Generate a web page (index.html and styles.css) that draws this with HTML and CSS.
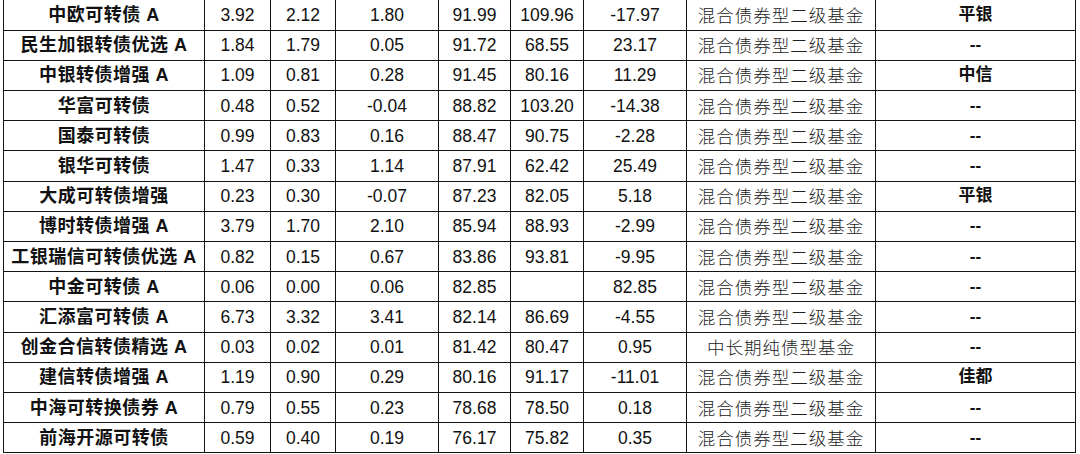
FILE: index.html
```html
<!DOCTYPE html>
<html>
<head>
<meta charset="utf-8">
<link rel="stylesheet" href="styles.css">
</head>
<body>
<div class="wrap">
<table class="funds">
<colgroup>
<col class="c-name"><col class="c-a"><col class="c-b"><col class="c-c"><col class="c-d"><col class="c-e"><col class="c-f"><col class="c-type"><col class="c-mgr">
</colgroup>
<tbody>
<tr><td class="name">中欧可转债 A</td><td>3.92</td><td>2.12</td><td>1.80</td><td>91.99</td><td>109.96</td><td>-17.97</td><td class="type">混合债券型二级基金</td><td class="mgr">平银</td></tr>
<tr><td class="name">民生加银转债优选 A</td><td>1.84</td><td>1.79</td><td>0.05</td><td>91.72</td><td>68.55</td><td>23.17</td><td class="type">混合债券型二级基金</td><td class="mgr">--</td></tr>
<tr><td class="name">中银转债增强 A</td><td>1.09</td><td>0.81</td><td>0.28</td><td>91.45</td><td>80.16</td><td>11.29</td><td class="type">混合债券型二级基金</td><td class="mgr">中信</td></tr>
<tr><td class="name">华富可转债</td><td>0.48</td><td>0.52</td><td>-0.04</td><td>88.82</td><td>103.20</td><td>-14.38</td><td class="type">混合债券型二级基金</td><td class="mgr">--</td></tr>
<tr><td class="name">国泰可转债</td><td>0.99</td><td>0.83</td><td>0.16</td><td>88.47</td><td>90.75</td><td>-2.28</td><td class="type">混合债券型二级基金</td><td class="mgr">--</td></tr>
<tr><td class="name">银华可转债</td><td>1.47</td><td>0.33</td><td>1.14</td><td>87.91</td><td>62.42</td><td>25.49</td><td class="type">混合债券型二级基金</td><td class="mgr">--</td></tr>
<tr><td class="name">大成可转债增强</td><td>0.23</td><td>0.30</td><td>-0.07</td><td>87.23</td><td>82.05</td><td>5.18</td><td class="type">混合债券型二级基金</td><td class="mgr">平银</td></tr>
<tr><td class="name">博时转债增强 A</td><td>3.79</td><td>1.70</td><td>2.10</td><td>85.94</td><td>88.93</td><td>-2.99</td><td class="type">混合债券型二级基金</td><td class="mgr">--</td></tr>
<tr><td class="name">工银瑞信可转债优选 A</td><td>0.82</td><td>0.15</td><td>0.67</td><td>83.86</td><td>93.81</td><td>-9.95</td><td class="type">混合债券型二级基金</td><td class="mgr">--</td></tr>
<tr><td class="name">中金可转债 A</td><td>0.06</td><td>0.00</td><td>0.06</td><td>82.85</td><td></td><td>82.85</td><td class="type">混合债券型二级基金</td><td class="mgr">--</td></tr>
<tr><td class="name">汇添富可转债 A</td><td>6.73</td><td>3.32</td><td>3.41</td><td>82.14</td><td>86.69</td><td>-4.55</td><td class="type">混合债券型二级基金</td><td class="mgr">--</td></tr>
<tr><td class="name">创金合信转债精选 A</td><td>0.03</td><td>0.02</td><td>0.01</td><td>81.42</td><td>80.47</td><td>0.95</td><td class="type">中长期纯债型基金</td><td class="mgr">--</td></tr>
<tr><td class="name">建信转债增强 A</td><td>1.19</td><td>0.90</td><td>0.29</td><td>80.16</td><td>91.17</td><td>-11.01</td><td class="type">混合债券型二级基金</td><td class="mgr">佳都</td></tr>
<tr><td class="name">中海可转换债券 A</td><td>0.79</td><td>0.55</td><td>0.23</td><td>78.68</td><td>78.50</td><td>0.18</td><td class="type">混合债券型二级基金</td><td class="mgr">--</td></tr>
<tr><td class="name">前海开源可转债</td><td>0.59</td><td>0.40</td><td>0.19</td><td>76.17</td><td>75.82</td><td>0.35</td><td class="type">混合债券型二级基金</td><td class="mgr">--</td></tr>
</tbody>
</table>
</div>
</body>
</html>
```
FILE: styles.css
```css
html, body {
  margin: 0;
  padding: 0;
  background: #ffffff;
}
.wrap {
  padding-left: 3px;
}
.funds {
  border-collapse: collapse;
  table-layout: fixed;
  width: 1072px;
  font-family: "Liberation Sans", Arial, "Noto Sans CJK SC", sans-serif;
  font-size: 17.5px;
  color: #111111;
}
.c-name { width: 201px; }
.c-a { width: 66px; }
.c-b { width: 65px; }
.c-c { width: 103px; }
.c-d { width: 72px; }
.c-e { width: 73px; }
.c-f { width: 103px; }
.c-type { width: 189px; }
.c-mgr { width: 200px; }
.funds tr {
  height: 30.2px;
}
.funds td {
  border: 1px solid #151515;
  padding: 0;
  text-align: center;
  vertical-align: middle;
  line-height: 20px;
  white-space: nowrap;
  overflow: hidden;
}
.funds tr:first-child td {
  border-top: none;
}
.funds td.name {
  font-family: "Liberation Sans", Arial, "Noto Sans CJK SC", sans-serif;
  font-weight: bold;
  font-size: 18px;
  letter-spacing: 0.5px;
}
.funds td.type {
  font-family: "Noto Sans CJK SC", sans-serif;
  font-weight: 300;
  font-size: 17.5px;
  letter-spacing: 1px;
  color: #222222;
}
.funds td.mgr {
  font-family: "Liberation Sans", Arial, "Noto Sans CJK SC", sans-serif;
  font-weight: bold;
  font-size: 17px;
}
```
